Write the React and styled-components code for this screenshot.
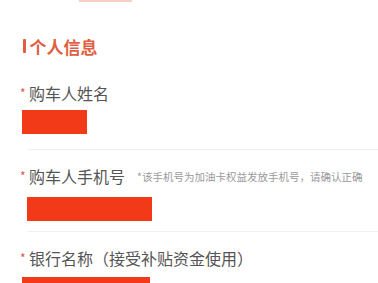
import React from 'react';
import styled, { createGlobalStyle } from 'styled-components';

const Global = createGlobalStyle`
  body {
    margin: 0;
    background: #fff;
    font-family: "Noto Sans CJK SC", "Noto Sans", sans-serif;
  }
`;

const Page = styled.div`
  width: 378px;
  height: 283px;
  overflow: hidden;
  background: #fff;
`;

const TopStub = styled.div`
  margin-left: 79px;
  width: 53px;
  height: 2px;
  background: #f7cfc4;
`;

const SectionTitle = styled.div`
  display: flex;
  align-items: center;
  gap: 4px;
  margin-top: 32px;
  padding-left: 23px;
  height: 24px;
  font-size: 17px;
  font-weight: 700;
  color: #df5f43;
  &::before {
    content: '';
    width: 2.5px;
    height: 14px;
    background: #df5f43;
    border-radius: 1px;
  }
`;

const Field = styled.div`
  padding: ${p => p.$top}px 0 ${p => p.$bottom}px 20px;
`;

const Label = styled.div`
  display: flex;
  align-items: center;
  height: 24px;
  font-size: 16px;
  color: #555;
  white-space: nowrap;
`;

const Star = styled.span`
  align-self: flex-start;
  margin-top: 3px;
  width: 9px;
  font-size: 12px;
  color: #d9574c;
`;

const Hint = styled.span`
  margin-left: 12px;
  font-size: 10.5px;
  color: #9a9a9a;
`;

const Redact = styled.div`
  margin-top: ${p => p.$gap}px;
  margin-left: ${p => p.$left}px;
  width: ${p => p.$w}px;
  height: 24px;
  background: #f23a19;
`;

const Divider = styled.div`
  margin-left: 28px;
  height: 1px;
  background: #efefef;
`;

export default function App() {
  return (
    <Page>
      <Global />
      <TopStub />
      <SectionTitle>个人信息</SectionTitle>
      <Field $top={23} $bottom={15}>
        <Label><Star>*</Star>购车人姓名</Label>
        <Redact $gap={5} $left={2} $w={65} />
      </Field>
      <Divider />
      <Field $top={14} $bottom={10}>
        <Label>
          <Star>*</Star>购车人手机号
          <Hint>*该手机号为加油卡权益发放手机号，请确认正确</Hint>
        </Label>
        <Redact $gap={9} $left={7} $w={125} />
      </Field>
      <Divider />
      <Field $top={14} $bottom={0}>
        <Label><Star>*</Star>银行名称（接受补贴资金使用）</Label>
        <Redact $gap={7} $left={2} $w={128} />
      </Field>
    </Page>
  );
}
